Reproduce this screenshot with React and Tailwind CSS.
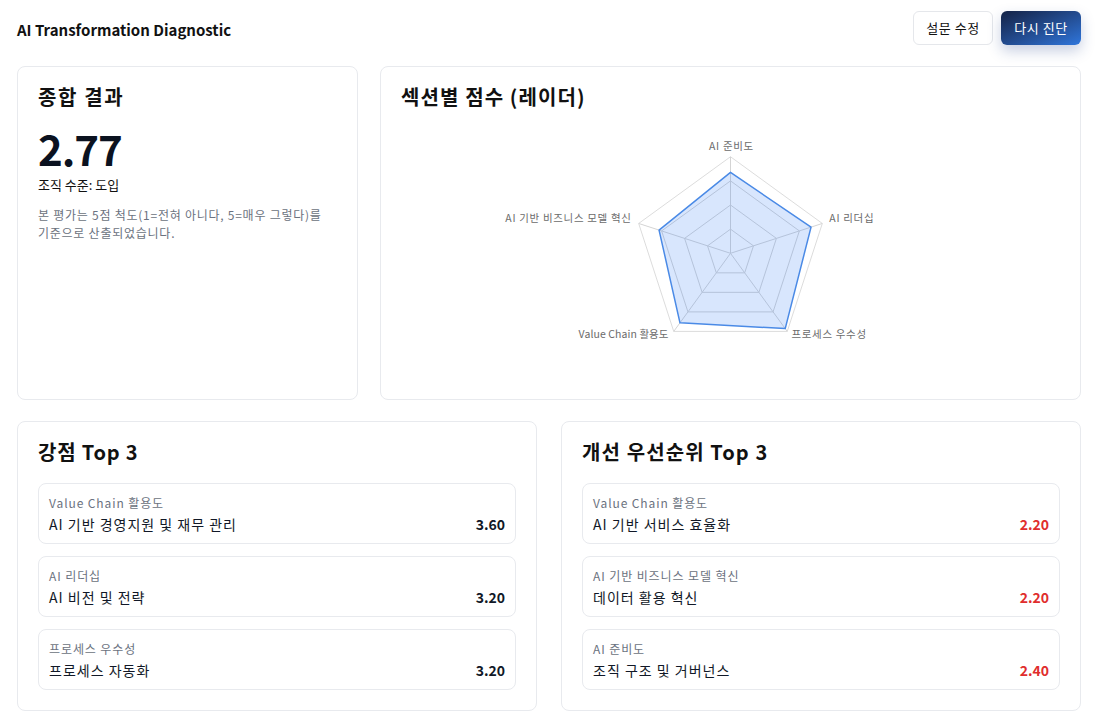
import React from "react";

const FONT = { fontFamily: '"Noto Sans CJK KR", "Noto Sans", sans-serif' };

const strengths = [
  { section: "Value Chain 활용도", item: "AI 기반 경영지원 및 재무 관리", score: "3.60" },
  { section: "AI 리더십", item: "AI 비전 및 전략", score: "3.20" },
  { section: "프로세스 우수성", item: "프로세스 자동화", score: "3.20" },
];

const priorities = [
  { section: "Value Chain 활용도", item: "AI 기반 서비스 효율화", score: "2.20" },
  { section: "AI 기반 비즈니스 모델 혁신", item: "데이터 활용 혁신", score: "2.20" },
  { section: "AI 준비도", item: "조직 구조 및 거버넌스", score: "2.40" },
];

function Radar() {
  const cx = 330;
  const cy = 122.3;
  const R = 96.7;
  const angles = [0, 1, 2, 3, 4].map((i) => (-90 + i * 72) * (Math.PI / 180));
  const pt = (i, f) => [cx + R * f * Math.cos(angles[i]), cy + R * f * Math.sin(angles[i])];
  const ring = (f) => angles.map((_, i) => pt(i, f).join(",")).join(" ");
  const data = [0.838, 0.877, 0.964, 0.89, 0.778];
  const dataPts = data.map((f, i) => pt(i, f).join(",")).join(" ");
  return (
    <svg width="100%" height="248" viewBox="0 0 660 248" className="block">
      {[0.25, 0.5, 0.75].map((f) => (
        <polygon key={f} points={ring(f)} fill="none" stroke="#d4d4d4" strokeWidth="1" />
      ))}
      <polygon points={ring(1)} fill="none" stroke="#dcdcdc" strokeWidth="1" />
      {angles.map((_, i) => {
        const [x, y] = pt(i, 1);
        return <line key={i} x1={cx} y1={cy} x2={x} y2={y} stroke="#d4d4d4" strokeWidth="1" />;
      })}
      <polygon points={dataPts} fill="rgba(59,130,246,0.2)" stroke="#4a8ae6" strokeWidth="1.5" strokeLinejoin="round" />
      <g fontSize="10.5" fill="#6b6b6b" style={FONT}>
        <text x={cx + 1} y={cy - 108} textAnchor="middle" dominantBaseline="central" letterSpacing="0.7">AI 준비도</text>
        <text x={cx + 99} y={cy - 36} textAnchor="start" dominantBaseline="central" letterSpacing="0.7">AI 리더십</text>
        <text x={cx + 61} y={cy + 80} textAnchor="start" dominantBaseline="central" letterSpacing="0.7">프로세스 우수성</text>
        <text x={cx - 62} y={cy + 80} textAnchor="end" dominantBaseline="central" letterSpacing="0.1">Value Chain 활용도</text>
        <text x={cx - 99} y={cy - 36} textAnchor="end" dominantBaseline="central" letterSpacing="0.7">AI 기반 비즈니스 모델 혁신</text>
      </g>
    </svg>
  );
}

function ItemList({ items, red }) {
  return (
    <div className="flex flex-col gap-3">
      {items.map((it, i) => (
        <div key={i} className="h-[61px] rounded-lg border border-[#e8eaee] bg-white px-2.5 pt-[11px]">
          <div className="text-xs leading-4 tracking-[0.9px] text-[#6b7280]">{it.section}</div>
          <div className="mt-[3px] flex items-center justify-between">
            <span className="text-sm leading-5 tracking-[1px] text-[#111827]">{it.item}</span>
            <span className={"text-sm leading-5 font-bold " + (red ? "text-[#e02d2d]" : "text-[#111827]")}>{it.score}</span>
          </div>
        </div>
      ))}
    </div>
  );
}

export default function App() {
  return (
    <div className="min-h-screen bg-white pl-[17px] pr-[16px] pt-[11px]" style={FONT}>
      <header className="flex items-center justify-between">
        <h1 className="mt-1 text-[15px] font-bold text-[#111]">AI Transformation Diagnostic</h1>
        <div className="flex gap-2">
          <button className="h-[34px] w-[80px] rounded-md border border-[#e5e7eb] bg-white text-[13px] tracking-[0.5px] text-[#111]">설문 수정</button>
          <button className="h-[34px] w-[80px] rounded-md bg-gradient-to-br from-[#142347] to-[#2f76dc] text-[13px] tracking-[0.5px] text-white shadow-[0_6px_14px_rgba(30,64,140,0.25)]">다시 진단</button>
        </div>
      </header>

      <div className="mt-[21px] grid grid-cols-[341px_1fr] gap-x-[22px]">
        <section className="h-[334px] rounded-lg border border-[#e8eaee] px-5 pt-4">
          <h2 className="text-xl font-bold leading-7 tracking-[1.6px] text-[#111]">종합 결과</h2>
          <div className="mt-4 text-[42px] font-bold leading-[42px] tracking-tight text-[#0b1220]">2.77</div>
          <div className="mt-[6px] text-[13px] leading-5 text-[#111]">조직 수준: 도입</div>
          <p className="mt-[11px] text-xs leading-[18px] tracking-[0.75px] text-[#6b7280]">
            본 평가는 5점 척도(1=전혀 아니다, 5=매우 그렇다)를
            <br />
            기준으로 산출되었습니다.
          </p>
        </section>
        <section className="h-[334px] rounded-lg border border-[#e8eaee] px-5 pt-4">
          <h2 className="text-xl font-bold leading-7 tracking-[1.1px] text-[#111]">섹션별 점수 (레이더)</h2>
          <div className="mt-5">
            <Radar />
          </div>
        </section>
      </div>

      <div className="mt-[21px] grid grid-cols-2 gap-x-6">
        <section className="rounded-lg border border-[#e8eaee] px-5 pt-4 pb-5">
          <h2 className="mb-[17px] text-xl font-bold leading-7 tracking-[0.8px] text-[#111]">강점 Top 3</h2>
          <ItemList items={strengths} />
        </section>
        <section className="rounded-lg border border-[#e8eaee] px-5 pt-4 pb-5">
          <h2 className="mb-[17px] text-xl font-bold leading-7 tracking-[1.1px] text-[#111]">개선 우선순위 Top 3</h2>
          <ItemList items={priorities} red />
        </section>
      </div>
    </div>
  );
}
